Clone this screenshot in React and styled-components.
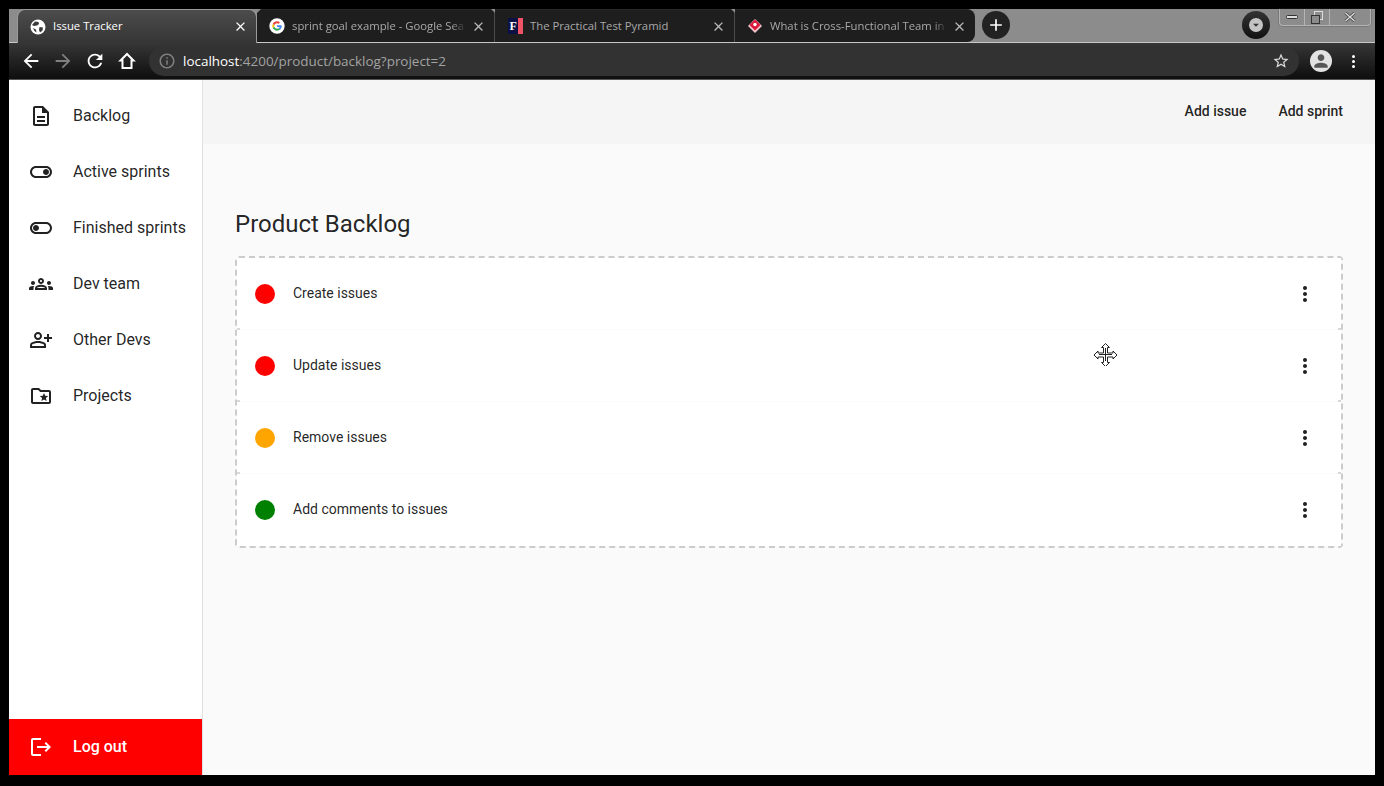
import React from 'react';
import styled, { createGlobalStyle } from 'styled-components';
import {
  MdOutlineDescription,
  MdOutlineToggleOn,
  MdOutlineToggleOff,
  MdOutlineGroups,
  MdOutlinePersonAddAlt,
  MdOutlineFolderSpecial,
  MdLogout,
  MdMoreVert,
  MdArrowBack,
  MdArrowForward,
  MdRefresh,
  MdInfoOutline,
  MdStarBorder,
  MdClose,
  MdAdd,
  MdPerson,
  MdArrowDropDown,
} from 'react-icons/md';

const GlobalStyle = createGlobalStyle`
  html, body {
    margin: 0;
    padding: 0;
    background: #000;
  }
  * {
    box-sizing: border-box;
  }
`;

const Frame = styled.div`
  width: 1384px;
  height: 786px;
  padding: 9px 9px 11px;
  background: #000;
  display: flex;
  flex-direction: column;
  overflow: hidden;
`;

/* browser chrome */
const TabStrip = styled.div`
  height: 34px;
  flex: none;
  display: flex;
  position: relative;
  padding-left: 8px;
  background: #8c8c8c;
  border-bottom: 1px solid #c8c8c8;
`;

const Tab = styled.div`
  width: ${({ width }) => width}px;
  height: ${({ active }) => (active ? '34px' : '33px')};
  flex: none;
  display: flex;
  align-items: center;
  padding: 0 8px 0 12px;
  color: ${({ active }) => (active ? '#fff' : '#a9a9a9')};
  background: ${({ active }) => (active ? 'linear-gradient(#4c4c4c, #353535)' : '#1e1e1e')};
  border-top: ${({ active }) => (active ? '1px solid #9a9a9a' : '1px solid #2a2a2a')};
  border-left: ${({ active }) => (active ? '1px solid #9a9a9a' : 'none')};
  border-right: ${({ active, last }) => (active ? '1px solid #9a9a9a' : last ? 'none' : '1px solid #4a4a4a')};
  border-radius: ${({ active, last }) => (active ? '8px 8px 0 0' : last ? '0 8px 8px 0' : '0')};
  font: 11.3px 'Open Sans', 'Liberation Sans', sans-serif;
  position: relative;
  z-index: ${({ active }) => (active ? 1 : 0)};
  &::after {
    content: '';
    display: ${({ last }) => (last ? 'none' : 'block')};
    position: absolute;
    top: -1px;
    right: -5px;
    border: 4px solid transparent;
    border-top-color: #8c8c8c;
    border-bottom: none;
  }
`;

const TabIcon = styled.span`
  width: 16px;
  height: 16px;
  flex: none;
  display: flex;
  align-items: center;
  justify-content: center;
  margin-right: 7px;
  color: #fff;
  font-size: 18px;
`;

const TabTitle = styled.span`
  flex: 1;
  min-width: 0;
  margin-bottom: 2px;
  white-space: nowrap;
  overflow: hidden;
  mask-image: ${({ fade }) => (fade ? 'linear-gradient(to left, transparent, #000 14px)' : 'none')};
`;

const TabClose = styled.span`
  width: 16px;
  height: 16px;
  flex: none;
  display: flex;
  align-items: center;
  justify-content: center;
  margin-left: 4px;
  font-size: 15px;
  color: ${({ active }) => (active ? '#fff' : '#bbb')};
`;

const LetterIcon = styled.span`
  width: 15px;
  height: 16px;
  display: flex;
  background: linear-gradient(to right, #0b1145 0 10px, #ef5466 10px);
  color: #fff;
  font: bold 12px/16px 'Liberation Serif', serif;
  padding-left: 2px;
`;

const NewTab = styled.div`
  width: 28px;
  height: 28px;
  flex: none;
  margin: 2px 0 0 7px;
  border-radius: 50%;
  background: #222;
  color: #fff;
  display: flex;
  align-items: center;
  justify-content: center;
  font-size: 20px;
`;

const StripSpacer = styled.div`
  flex: 1;
`;

const ProfileMenu = styled.div`
  width: 28px;
  height: 28px;
  flex: none;
  margin: 2px 9px 0 0;
  border-radius: 50%;
  background: linear-gradient(#333, #111);
  display: flex;
  align-items: center;
  justify-content: center;
`;

const ProfileDot = styled.span`
  width: 14px;
  height: 14px;
  border-radius: 50%;
  background: #c4c4c4;
  color: #333;
  display: flex;
  align-items: center;
  justify-content: center;
  font-size: 16px;
`;

const WindowControls = styled.div`
  width: 92px;
  height: 17px;
  flex: none;
  margin-right: 4px;
  display: flex;
  border: 1px solid #b4b4b4;
  border-top: none;
  border-radius: 0 0 4px 4px;
  box-shadow: 0 0 0 1px rgba(60, 60, 60, 0.25);
`;

const WindowButton = styled.div`
  width: ${({ width }) => width}px;
  display: flex;
  align-items: center;
  justify-content: center;
  border-right: ${({ last }) => (last ? 'none' : '1px solid #b4b4b4')};
  svg {
    display: block;
  }
`;

const Toolbar = styled.div`
  height: 37px;
  flex: none;
  display: flex;
  align-items: center;
  padding: 0 0 0 10px;
  background: linear-gradient(#363636, #0e0e0e);
  border-bottom: 1px solid #555;
`;

const NavIcon = styled.span`
  width: 24px;
  height: 24px;
  flex: none;
  margin-right: ${({ gap }) => gap}px;
  display: flex;
  align-items: center;
  justify-content: center;
  color: ${({ muted }) => (muted ? '#808080' : '#fff')};
  font-size: ${({ size }) => size || 22}px;
`;

const StarIcon = styled(NavIcon)`
  color: #ddd;
`;

const Omnibox = styled.div`
  width: 1150px;
  height: 30px;
  flex: none;
  margin-left: 10px;
  padding: 0 6px 0 6px;
  display: flex;
  align-items: center;
  border-radius: 15px;
  background: #323232;
`;

const Url = styled.span`
  flex: 1;
  margin-left: 4px;
  color: #a3a3a3;
  white-space: nowrap;
  font: 13.45px 'Open Sans', 'Liberation Sans', sans-serif;
  b {
    color: #fff;
    font-weight: 400;
  }
`;

const Avatar = styled.span`
  width: 22px;
  height: 22px;
  flex: none;
  margin-left: 11px;
  border-radius: 50%;
  background: #e2e2e2;
  color: #555;
  display: flex;
  align-items: center;
  justify-content: center;
  font-size: 20px;
`;

const ChromeMenu = styled.span`
  margin-left: 20px;
  display: flex;
  flex-direction: column;
  gap: 2px;
  i {
    width: 3px;
    height: 3px;
    border-radius: 50%;
    background: #fff;
  }
`;

/* app */
const Page = styled.div`
  flex: 1;
  min-height: 0;
  display: flex;
  font-family: Roboto, 'Liberation Sans', sans-serif;
`;

const Sidebar = styled.aside`
  width: 194px;
  flex: none;
  display: flex;
  flex-direction: column;
  padding-top: 8px;
  background: #fff;
  border-right: 1px solid #e0e0e0;
`;

const NavItem = styled.a`
  height: 56px;
  flex: none;
  display: flex;
  align-items: center;
  padding-left: 20px;
  padding-bottom: 1px;
  gap: 20px;
  font-size: 16px;
  color: rgba(0, 0, 0, 0.87);
  svg {
    flex: none;
    width: 24px;
    height: 24px;
  }
`;

const LogoutItem = styled(NavItem)`
  margin-top: auto;
  color: #fff;
  background: #f00;
  font-weight: 500;
`;

const Content = styled.main`
  flex: 1;
  min-width: 0;
  display: flex;
  flex-direction: column;
  background: #fafafa;
  position: relative;
`;

const ActionBar = styled.div`
  height: 64px;
  flex: none;
  display: flex;
  justify-content: flex-end;
  gap: 32px;
  padding: 23px 32px 0 0;
  background: #f5f5f5;
`;

const ActionButton = styled.button`
  height: 16px;
  padding: 0;
  border: none;
  background: none;
  font: 500 14px/16px Roboto, 'Liberation Sans', sans-serif;
  color: rgba(0, 0, 0, 0.87);
`;

const Section = styled.section`
  padding: 64px 32px 0;
`;

const Title = styled.h2`
  margin: 0 0 16px;
  height: 32px;
  font: 400 24px/32px Roboto, 'Liberation Sans', sans-serif;
  color: rgba(0, 0, 0, 0.87);
`;

const IssueList = styled.div`
  border: 2px dashed #ccc;
  border-radius: 4px;
`;

const IssueRow = styled.div`
  height: 72px;
  display: flex;
  align-items: center;
  padding: 0 24px 0 18px;
  background: #fff;
  position: relative;
  border-bottom: 1px solid ${({ last }) => (last ? '#fff' : '#fafafa')};
  &::before,
  &::after {
    content: '';
    display: ${({ last }) => (last ? 'none' : 'block')};
    position: absolute;
    bottom: -1px;
    width: 3px;
    height: 2px;
    background: #d8d8d8;
  }
  &::before {
    left: 0;
  }
  &::after {
    right: 0;
  }
`;

const Priority = styled.span`
  width: 20px;
  height: 20px;
  flex: none;
  border-radius: 50%;
  background: ${({ color }) => color};
`;

const IssueName = styled.span`
  flex: 1;
  margin-left: 18px;
  padding-bottom: 1px;
  font-size: 14px;
  color: rgba(0, 0, 0, 0.87);
`;

const MoreButton = styled.span`
  width: 24px;
  height: 24px;
  flex: none;
  display: flex;
  align-items: center;
  justify-content: center;
  font-size: 24px;
  color: rgba(0, 0, 0, 0.87);
`;

const MoveCursor = styled.svg`
  position: absolute;
  left: 891px;
  top: 263px;
  width: 23px;
  height: 23px;
`;

const navItems = [
  ['Backlog', MdOutlineDescription],
  ['Active sprints', MdOutlineToggleOn],
  ['Finished sprints', MdOutlineToggleOff],
  ['Dev team', MdOutlineGroups],
  ['Other Devs', MdOutlinePersonAddAlt],
  ['Projects', MdOutlineFolderSpecial],
];

const issues = [
  { name: 'Create issues', color: '#f00' },
  { name: 'Update issues', color: '#f00' },
  { name: 'Remove issues', color: '#ffa500' },
  { name: 'Add comments to issues', color: '#008000' },
];

const GlobeIcon = () => (
  <svg width="16" height="16" viewBox="0 0 16 16">
    <circle cx="8" cy="8" r="7.500" fill="#fff" />
    <path fill="#3a3a3a" d="M5 2.500l3.500.5.5 2-2 1.500-3 .5-2-1zM9.500 8l3.500.5-.5 3-2.500 2-1-2.500zM3 9l3 1.500.5 3L4.500 12z" />
  </svg>
);

const GoogleIcon = () => (
  <svg width="16" height="16" viewBox="0 0 48 48">
    <path fill="#fff" d="M24 1a23 23 0 1 0 0 46 23 23 0 0 0 0-46z" />
    <path fill="#EA4335" d="M24 10c3.6 0 6.6 1.3 8.9 3.4l-4.2 4.2C27.400 16.400 25.800 15.800 24 15.800c-3.700 0-6.800 2.500-7.900 5.800l-4.900-3.800C13.500 13.200 18.400 10 24 10z" />
    <path fill="#4285F4" d="M38 24.300c0-1-.1-2-.3-2.900H24v5.500h7.900c-.4 1.800-1.400 3.300-2.900 4.300l4.700 3.600c2.700-2.500 4.300-6.200 4.300-10.500z" />
    <path fill="#FBBC05" d="M16.100 26.400c-.3-.8-.4-1.600-.4-2.400s.1-1.600.4-2.400l-4.900-3.800C10.400 19.400 10 21.600 10 24s.4 4.600 1.200 6.200z" />
    <path fill="#34A853" d="M24 38c3.800 0 7-1.300 9.700-3.500L29 30.900c-1.300.9-2.900 1.400-5 1.400-3.700 0-6.800-2.500-7.900-5.900l-4.900 3.800C13.500 34.800 18.400 38 24 38z" />
  </svg>
);

const DiamondIcon = () => (
  <svg width="16" height="16" viewBox="0 0 16 16">
    <path fill="#f4c6cc" d="M8 1l7 7-7 7-7-7z" />
    <path fill="#e0173c" d="M8 1.500L13.500 7 8 12.500 2.500 7z" />
    <circle cx="8" cy="6.500" r="1.700" fill="#fff" />
  </svg>
);

const HomeIcon = () => (
  <svg width="18" height="18" viewBox="0 0 18 18">
    <path fill="none" stroke="#fff" strokeWidth="2" strokeLinejoin="miter" d="M9 2L2.500 8.500h2v7.500h9V8.500h2z" />
  </svg>
);

const App = () => (
  <>
    <GlobalStyle />
    <Frame>
      <TabStrip>
        <Tab active width={240}>
          <TabIcon><GlobeIcon /></TabIcon>
          <TabTitle>Issue Tracker</TabTitle>
          <TabClose active><MdClose /></TabClose>
        </Tab>
        <Tab width={238}>
          <TabIcon><GoogleIcon /></TabIcon>
          <TabTitle fade>sprint goal example - Google Sea</TabTitle>
          <TabClose><MdClose /></TabClose>
        </Tab>
        <Tab width={240}>
          <TabIcon><LetterIcon>F</LetterIcon></TabIcon>
          <TabTitle>The Practical Test Pyramid</TabTitle>
          <TabClose><MdClose /></TabClose>
        </Tab>
        <Tab last width={240}>
          <TabIcon><DiamondIcon /></TabIcon>
          <TabTitle fade>What is Cross-Functional Team in</TabTitle>
          <TabClose><MdClose /></TabClose>
        </Tab>
        <NewTab><MdAdd /></NewTab>
        <StripSpacer />
        <ProfileMenu>
          <ProfileDot><MdArrowDropDown /></ProfileDot>
        </ProfileMenu>
        <WindowControls>
          <WindowButton width={25}>
            <svg width="12" height="6" viewBox="0 0 12 6">
              <rect x="0.500" y="1.500" width="11" height="3" rx="1" fill="#ddd" stroke="#333" />
            </svg>
          </WindowButton>
          <WindowButton width={26}>
            <svg width="12" height="13" viewBox="0 0 12 13" fill="none" stroke="#333">
              <rect x="3.500" y="0.500" width="8" height="8" stroke="#ddd" />
              <rect x="0.500" y="4.500" width="8" height="8" fill="#8c8c8c" />
            </svg>
          </WindowButton>
          <WindowButton last width={40}>
            <svg width="12" height="10" viewBox="0 0 12 10">
              <path d="M1.500 1l9 8M10.500 1l-9 8" stroke="#444" strokeWidth="3" />
              <path d="M1.500 1l9 8M10.500 1l-9 8" stroke="#ddd" strokeWidth="1.400" />
            </svg>
          </WindowButton>
        </WindowControls>
      </TabStrip>

      <Toolbar>
        <NavIcon gap={8}><MdArrowBack /></NavIcon>
        <NavIcon muted gap={8}><MdArrowForward /></NavIcon>
        <NavIcon gap={8}><MdRefresh /></NavIcon>
        <NavIcon><HomeIcon /></NavIcon>
        <Omnibox>
          <NavIcon muted size={18} gap={0}><MdInfoOutline /></NavIcon>
          <Url><b>localhost</b>:4200/product/backlog?project=2</Url>
          <StarIcon size={18} gap={0}><MdStarBorder /></StarIcon>
        </Omnibox>
        <Avatar><MdPerson /></Avatar>
        <ChromeMenu><i /><i /><i /></ChromeMenu>
      </Toolbar>

      <Page>
        <Sidebar>
          {navItems.map(([label, Icon]) => (
            <NavItem key={label}>
              <Icon />
              {label}
            </NavItem>
          ))}
          <LogoutItem>
            <MdLogout />
            Log out
          </LogoutItem>
        </Sidebar>

        <Content>
          <ActionBar>
            <ActionButton>Add issue</ActionButton>
            <ActionButton>Add sprint</ActionButton>
          </ActionBar>
          <Section>
            <Title>Product Backlog</Title>
            <IssueList>
              {issues.map((issue, i) => (
                <IssueRow key={issue.name} last={i === issues.length - 1}>
                  <Priority color={issue.color} />
                  <IssueName>{issue.name}</IssueName>
                  <MoreButton><MdMoreVert /></MoreButton>
                </IssueRow>
              ))}
            </IssueList>
          </Section>
          <MoveCursor viewBox="0 0 23 23">
            <path
              fill="#fff"
              stroke="#222"
              d="M11.500 .5l4 4h-2v5.500h5.500v-2l4 4-4 4v-2h-5.500v5.500h2l-4 4-4-4h2v-5.500h-5.500v2l-4-4 4-4v2h5.500v-5.500h-2z"
            />
            <path fill="none" stroke="#222" d="M11.500 5v13M5 11.500h13" />
          </MoveCursor>
        </Content>
      </Page>
    </Frame>
  </>
);

export default App;
